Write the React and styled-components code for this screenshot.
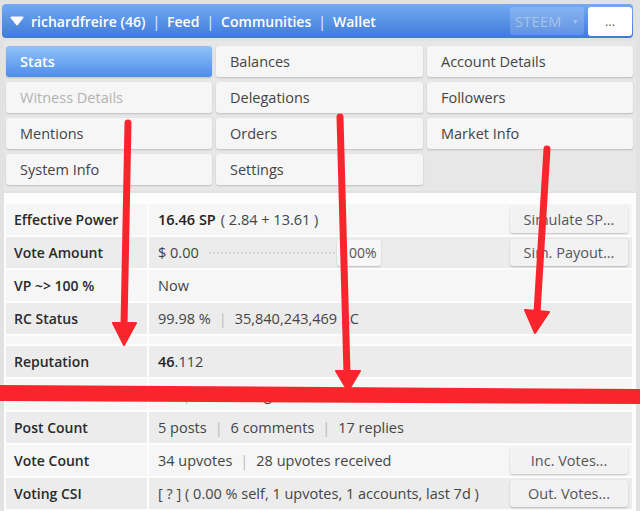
import React from "react";
import styled, { createGlobalStyle } from "styled-components";

const Global = createGlobalStyle`
  html, body { margin: 0; padding: 0; }
  body {
    background: #e2e2e2;
    font-family: "Open Sans", "Noto Sans", sans-serif;
    width: 640px;
    height: 511px;
    overflow: hidden;
  }
`;

const Page = styled.div`
  position: relative;
  width: 640px;
  height: 511px;
  padding: 4px 0 0 0;
  box-sizing: border-box;
`;

const Header = styled.div`
  margin-left: 2px;
  width: 631px;
  height: 34px;
  box-sizing: border-box;
  border-radius: 4px;
  background: linear-gradient(#74aaf3, #3f7ad8);
  display: flex;
  align-items: center;
  padding: 0 0 0 8px;
  color: #fff;
  font-size: 14px;
  font-weight: 600;
`;

const Nav = styled.div`
  display: flex;
  align-items: center;
  gap: 6px;
  flex: 1;
  white-space: nowrap;
`;

const Brand = styled.span`
  margin-left: 1px;
`;

const Sep = styled.span`
  font-weight: 400;
  opacity: 0.9;
  margin: 0 1px;
`;

const Select = styled.div`
  width: 74px;
  height: 28px;
  border-radius: 3px;
  background: rgba(255, 255, 255, 0.16);
  color: #a9c2e6;
  font-size: 14.5px;
  font-weight: 400;
  display: flex;
  align-items: center;
  justify-content: center;
  gap: 10px;
  margin-right: 4px;
  letter-spacing: 0.3px;
`;

const Caret = styled.span`
  font-size: 7px;
`;

const More = styled.div`
  width: 44px;
  height: 29px;
  border-radius: 3px;
  background: #fff;
  color: #666;
  font-size: 13px;
  font-weight: 400;
  display: flex;
  align-items: center;
  justify-content: center;
  margin-right: 1px;
`;

const TabPanel = styled.div`
  margin: 3px 4px 0 4px;
  background: #e7e7e7;
  padding: 5px 2px 6px 2px;
  display: grid;
  grid-template-columns: 206px 207px 206px;
  grid-auto-rows: 31px;
  column-gap: 4px;
  row-gap: 5px;
`;

const Tab = styled.div`
  border-radius: 3px;
  display: flex;
  align-items: center;
  padding-left: 14px;
  font-size: 14.5px;
  background: ${(p) => (p.$active ? "linear-gradient(#92c3fa, #4d8ce8)" : "#f6f6f6")};
  color: ${(p) => (p.$active ? "#fff" : p.$disabled ? "#b3b3b3" : "#444")};
  font-weight: ${(p) => (p.$active ? 600 : 400)};
  box-shadow: 0 1px 2px rgba(0, 0, 0, 0.18);
`;

const Body = styled.div`
  margin: 2px 4px 0 4px;
  background: #fdfdfd;
  padding: 11px 4px 4px 2px;
  height: 318px;
  box-sizing: border-box;
`;

const Table = styled.div`
  display: flex;
  flex-direction: column;
  gap: 2px;
`;

const Row = styled.div`
  display: grid;
  grid-template-columns: 141px 1fr;
  column-gap: 2px;
  height: ${(p) => (p.$h ? p.$h : 31)}px;
  background: #fdfdfd;
`;

const Label = styled.div`
  background: ${(p) => (p.$alt ? "#ececec" : "#f6f6f6")};
  display: flex;
  align-items: center;
  padding-left: 8px;
  font-size: 14px;
  font-weight: 600;
  color: #2a2a2a;
`;

const Value = styled.div`
  background: ${(p) => (p.$alt ? "#ececec" : "#f6f6f6")};
  display: flex;
  align-items: center;
  padding-left: 9px;
  padding-right: 4px;
  font-size: 14.5px;
  color: #444;
  white-space: nowrap;
`;

const Strong = styled.b`
  font-weight: 600;
  color: #222;
  margin-right: 5px;
`;

const Bold = styled.b`
  font-weight: 600;
  color: #222;
`;

const Pipe = styled.span`
  color: #bbb;
  margin: 0 8px;
`;

const Spacer = styled.div`
  flex: 1;
`;

const ActionButton = styled.div`
  width: 118px;
  height: 27px;
  border-radius: 3px;
  background: #f2f2f2;
  box-shadow: 0 1px 2px rgba(0, 0, 0, 0.22);
  display: flex;
  align-items: center;
  justify-content: center;
  font-size: 14.5px;
  color: #555;
`;

const Slider = styled.div`
  width: 130px;
  margin-left: 10px;
  border-top: 2px dotted #d9d9d9;
  height: 0;
`;

const Percent = styled.div`
  width: 44px;
  height: 26px;
  margin-left: -2px;
  border-radius: 3px;
  background: #f7f7f7;
  box-shadow: 0 1px 2px rgba(0, 0, 0, 0.2);
  display: flex;
  align-items: center;
  justify-content: center;
  font-size: 14px;
  color: #555;
`;

const Overlay = styled.svg`
  position: absolute;
  left: 0;
  top: 0;
  pointer-events: none;
`;

const tabs = [
  { t: "Stats", active: true },
  { t: "Balances" },
  { t: "Account Details" },
  { t: "Witness Details", disabled: true },
  { t: "Delegations" },
  { t: "Followers" },
  { t: "Mentions" },
  { t: "Orders" },
  { t: "Market Info" },
  { t: "System Info" },
  { t: "Settings" },
];

export default function App() {
  return (
    <>
      <Global />
      <Page>
        <Header>
          <Nav>
            <svg width="14" height="10" viewBox="0 0 14 10">
              <path d="M1.5 1.5 H12.5 L7 8.5 Z" fill="#fff" stroke="#fff" strokeWidth="2" strokeLinejoin="round" />
            </svg>
            <Brand>richardfreire (46)</Brand>
            <Sep>|</Sep>
            <span>Feed</span>
            <Sep>|</Sep>
            <span>Communities</span>
            <Sep>|</Sep>
            <span>Wallet</span>
          </Nav>
          <Select>
            STEEM <Caret>▼</Caret>
          </Select>
          <More>...</More>
        </Header>

        <TabPanel>
          {tabs.map((x) => (
            <Tab key={x.t} $active={x.active} $disabled={x.disabled}>
              {x.t}
            </Tab>
          ))}
        </TabPanel>

        <Body>
          <Table>
            <Row>
              <Label>Effective Power</Label>
              <Value>
                <Strong>16.46 SP</Strong>( 2.84 + 13.61 )
                <Spacer />
                <ActionButton>Simulate SP...</ActionButton>
              </Value>
            </Row>
            <Row>
              <Label $alt>Vote Amount</Label>
              <Value $alt>
                $ 0.00
                <Slider />
                <Percent>100%</Percent>
                <Spacer />
                <ActionButton>Sim. Payout...</ActionButton>
              </Value>
            </Row>
            <Row>
              <Label>VP ~&gt; 100 %</Label>
              <Value>Now</Value>
            </Row>
            <Row>
              <Label $alt>RC Status</Label>
              <Value $alt>
                99.98 %<Pipe>|</Pipe>35,840,243,469 RC
              </Value>
            </Row>
            <Row $h={8}>
              <Label />
              <Value />
            </Row>
            <Row>
              <Label $alt>Reputation</Label>
              <Value $alt>
                <Bold>46</Bold>.112
              </Value>
            </Row>
            <Row>
              <Label>Follow Count</Label>
              <Value>
                13<Pipe>|</Pipe>5 following
              </Value>
            </Row>
            <Row>
              <Label $alt>Post Count</Label>
              <Value $alt>
                5 posts<Pipe>|</Pipe>6 comments<Pipe>|</Pipe>17 replies
              </Value>
            </Row>
            <Row>
              <Label>Vote Count</Label>
              <Value>
                34 upvotes<Pipe>|</Pipe>28 upvotes received
                <Spacer />
                <ActionButton>Inc. Votes...</ActionButton>
              </Value>
            </Row>
            <Row>
              <Label $alt>Voting CSI</Label>
              <Value $alt>
                [ ? ] ( 0.00 % self, 1 upvotes, 1 accounts, last 7d )
                <Spacer />
                <ActionButton>Out. Votes...</ActionButton>
              </Value>
            </Row>
          </Table>
        </Body>

        <Overlay width="640" height="511" viewBox="0 0 640 511">
          <g fill="#f8262c" stroke="#f8262c" strokeLinecap="round" strokeLinejoin="round">
            <line x1="128" y1="123" x2="124" y2="326" strokeWidth="7" />
            <polygon points="113,323 136,323 124,345" strokeWidth="2" />
            <line x1="340" y1="117" x2="347" y2="374" strokeWidth="7" />
            <polygon points="336,371 360,371 348,391" strokeWidth="2" />
            <line x1="547" y1="149" x2="537" y2="313" strokeWidth="7" />
            <polygon points="525,310 549,312 535,333" strokeWidth="2" />
            <polygon points="0,385 640,389 640,404 0,401" strokeWidth="0" />
          </g>
        </Overlay>
      </Page>
    </>
  );
}
